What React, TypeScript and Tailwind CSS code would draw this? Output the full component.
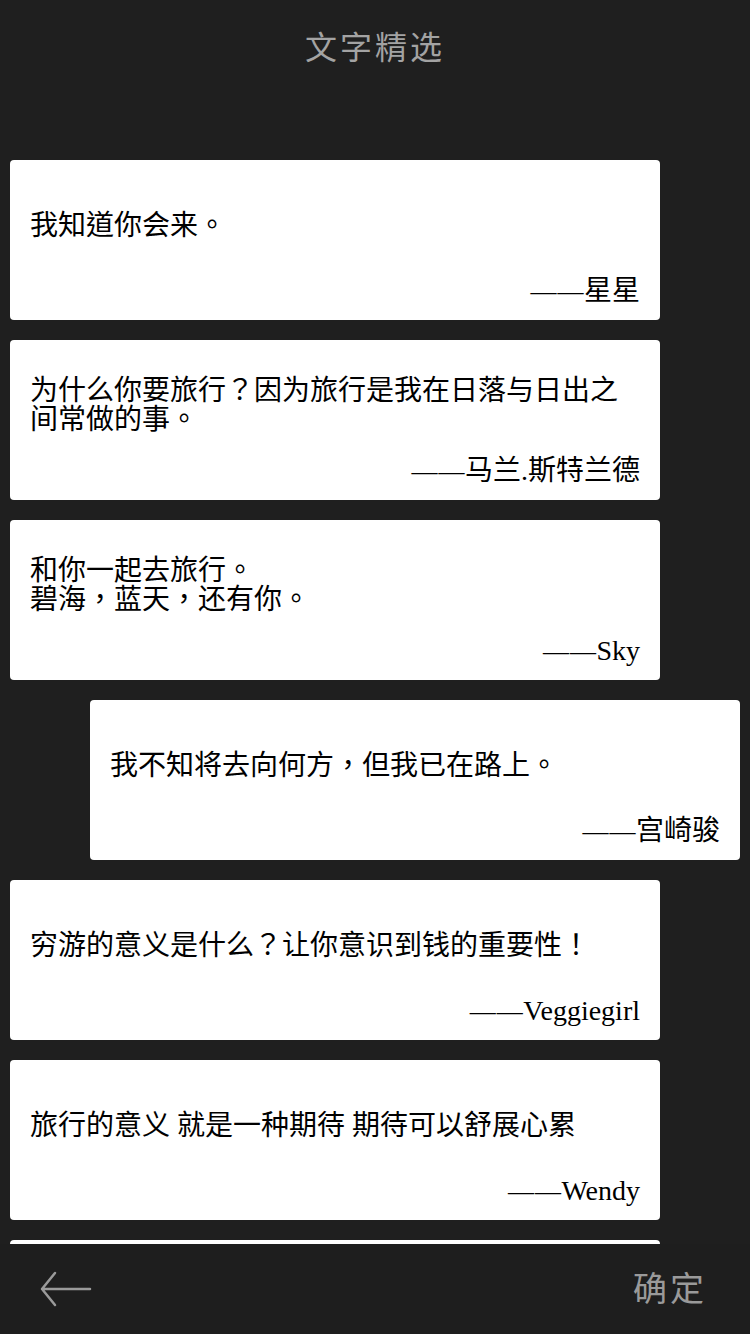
const quotes = [
  { text: ["我知道你会来。"], author: "星星" },
  { text: ["为什么你要旅行？因为旅行是我在日落与日出之", "间常做的事。"], author: "马兰.斯特兰德" },
  { text: ["和你一起去旅行。", "碧海，蓝天，还有你。"], author: "Sky" },
  { text: ["我不知将去向何方，但我已在路上。"], author: "宫崎骏", selected: true },
  { text: ["穷游的意义是什么？让你意识到钱的重要性！"], author: "Veggiegirl" },
  { text: ["旅行的意义 就是一种期待 期待可以舒展心累"], author: "Wendy" },
  { text: [], author: "" },
];

const font = {
  fontFamily: '"Liberation Serif", "Noto Sans CJK TC", serif',
};

function Dash() {
  return <span className="inline-block w-[27px] text-center text-[26px]">—</span>;
}

export default function App() {
  return (
    <div
      className="flex h-[1334px] w-[750px] flex-col overflow-hidden bg-[#1f1f1f]"
      style={font}
    >
      <div className="flex h-[96px] shrink-0 items-center justify-center">
        <span className="text-[32px] tracking-[3px] text-[#a3a3a3]">文字精选</span>
      </div>

      <div className="flex flex-1 flex-col gap-5 overflow-hidden pt-[64px]">
        {quotes.map((q, i) => (
          <div
            key={i}
            className={`flex h-[160px] w-[650px] shrink-0 flex-col rounded bg-white px-5 text-[28px] text-black ${
              q.selected ? "ml-[90px]" : "ml-[10px]"
            }`}
          >
            <div className="flex h-[116px] flex-col justify-center pt-[14px] leading-[29px]">
              {q.text.map((line) => (
                <div key={line}>{line}</div>
              ))}
            </div>
            {q.author && (
              <div className="text-right leading-[30px]">
                <Dash />
                <Dash />
                {q.author}
              </div>
            )}
          </div>
        ))}
      </div>

      <div className="flex h-[90px] shrink-0 items-center justify-between bg-[#1e1e1e] pl-[40px] pr-[43px]">
        <svg width="52" height="38" viewBox="0 0 52 38" fill="none">
          <path
            d="M2 19H50M15 3L2 19L15 35"
            stroke="#9a9a9a"
            strokeWidth="2.5"
            strokeLinecap="round"
            strokeLinejoin="round"
          />
        </svg>
        <span className="text-[34px] tracking-[3px] text-[#9a9a9a]">确定</span>
      </div>
    </div>
  );
}
